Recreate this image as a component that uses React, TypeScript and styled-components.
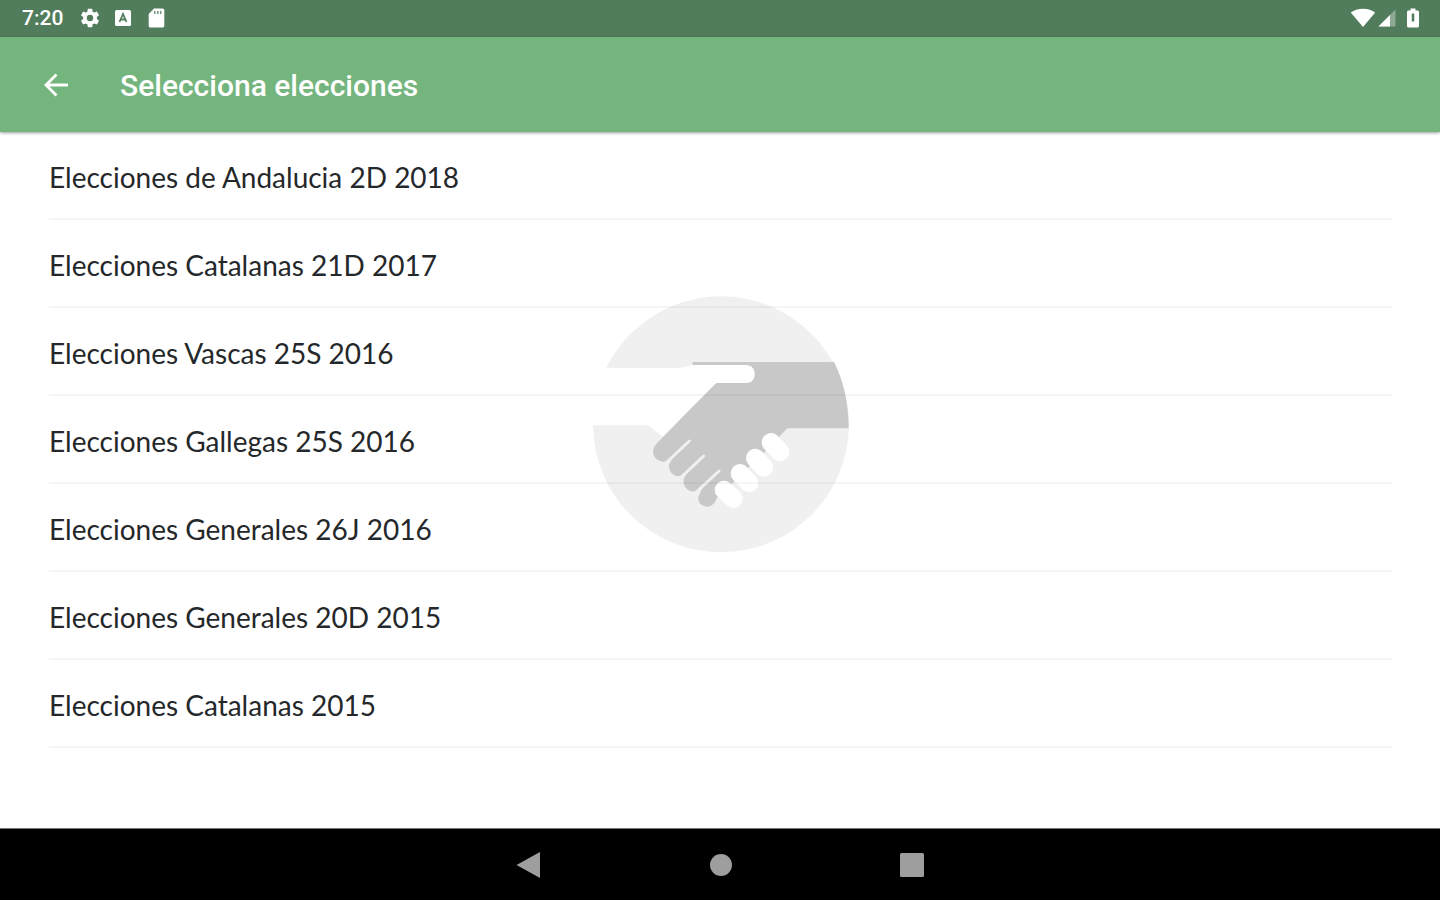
import React from "react";
import styled, { createGlobalStyle } from "styled-components";

const GlobalStyle = createGlobalStyle`
  * { box-sizing: border-box; }
  body { margin: 0; background: #fff; }
  button { margin: 0; padding: 0; border: 0; background: none; color: inherit; font: inherit; cursor: pointer; }
  svg { display: block; }
`;

const Screen = styled.div`
  display: flex;
  flex-direction: column;
  min-height: 100vh;
  font-family: Roboto, sans-serif;
`;

const StatusBar = styled.div`
  display: flex;
  align-items: center;
  justify-content: space-between;
  height: 37px;
  padding: 0 20px 2px 22px;
  background: #527d5d;
  color: #fff;
`;

const StatusGroup = styled.div<{ $gap: number }>`
  display: flex;
  align-items: center;
  gap: ${(p) => p.$gap}px;
`;

const Clock = styled.span`
  margin-right: 5px;
  font-size: 21px;
  font-weight: 500;
  line-height: 24px;
`;

const AppBar = styled.header`
  position: relative;
  display: flex;
  align-items: center;
  gap: 40px;
  height: 95px;
  padding: 2px 32px 0;
  background: #74b57e;
  color: #fff;
  box-shadow: 0 1px 3px rgba(0, 0, 0, 0.4);
`;

const BackButton = styled.button`
  display: grid;
  place-items: center;
  width: 48px;
  height: 48px;
`;

const Title = styled.h1`
  margin: 0;
  font-size: 30px;
  font-weight: 500;
  line-height: 36px;
`;

const Content = styled.main`
  position: relative;
  flex: 1;
  padding: 0 48px 80px 49px;
`;

const Watermark = styled.svg`
  position: absolute;
  top: 164px;
  left: 50%;
  width: 256px;
  height: 256px;
  overflow: visible;
  transform: translateX(-50%);
`;

const List = styled.ul`
  position: relative;
  margin: 0;
  padding: 0;
  list-style: none;
`;

const Item = styled.li`
  border-bottom: 2px solid rgba(0, 0, 0, 0.04);
`;

const ItemButton = styled.button`
  display: block;
  width: 100%;
  padding: 27px 0 23px;
  color: #25282a;
  font-family: Lato, sans-serif;
  font-size: 28px;
  line-height: 36px;
  text-align: left;
`;

const NavBar = styled.nav`
  display: flex;
  justify-content: center;
  height: 72px;
  border-top: 1px solid #777;
  background: #000;
`;

const NavButton = styled.button`
  display: grid;
  place-items: center;
  width: 192px;
`;

const elections = [
  "Elecciones de Andalucia 2D 2018",
  "Elecciones Catalanas 21D 2017",
  "Elecciones Vascas 25S 2016",
  "Elecciones Gallegas 25S 2016",
  "Elecciones Generales 26J 2016",
  "Elecciones Generales 20D 2015",
  "Elecciones Catalanas 2015",
];

const GearIcon = () => (
  <svg width="22" height="22" viewBox="0 0 24 24" fill="currentColor" aria-hidden="true">
    <path d="M19.43 12.98c.04-.32.07-.64.07-.98s-.03-.66-.07-.98l2.11-1.65c.19-.15.24-.42.12-.64l-2-3.46c-.12-.22-.39-.3-.61-.22l-2.49 1c-.52-.4-1.08-.73-1.69-.98l-.38-2.65A.488.488 0 0 0 14 2h-4c-.25 0-.46.18-.49.42l-.38 2.65c-.61.25-1.17.59-1.69.98l-2.49-1c-.23-.09-.49 0-.61.22l-2 3.46c-.13.22-.07.49.12.64l2.11 1.65c-.04.32-.07.65-.07.98s.03.66.07.98l-2.11 1.65c-.19.15-.24.42-.12.64l2 3.46c.12.22.39.3.61.22l2.49-1c.52.4 1.08.73 1.69.98l.38 2.65c.03.24.24.42.49.42h4c.25 0 .46-.18.49-.42l.38-2.65c.61-.25 1.17-.59 1.69-.98l2.49 1c.23.09.49 0 .61-.22l2-3.46c.12-.22.07-.49-.12-.64l-2.11-1.65zM12 15.5A3.5 3.5 0 1 1 12 8.500a3.5 3.5 0 0 1 0 7z" />
  </svg>
);

const KeyboardIcon = () => (
  <svg width="22" height="22" viewBox="0 0 22 22" aria-hidden="true">
    <rect x="3" y="3" width="16" height="16" rx="1.500" fill="currentColor" />
    <path d="M7.500 15 11 7l3.500 8M9 12.500h4" fill="none" stroke="#527d5d" strokeWidth="1.800" />
  </svg>
);

const SdCardIcon = () => (
  <svg width="22" height="22" viewBox="0 0 22 22" aria-hidden="true">
    <path d="M9 1.500h8.500c1 0 1.800.8 1.800 1.800v15.400c0 1-.8 1.800-1.800 1.800h-12c-1 0-1.800-.8-1.800-1.800V7z" fill="currentColor" />
    <path d="M9.800 4v3M12.800 4v3M15.800 4v3" stroke="#527d5d" strokeWidth="1.200" />
  </svg>
);

const WifiIcon = () => (
  <svg width="26" height="20" viewBox="0 0 26 20" fill="currentColor" aria-hidden="true">
    <path d="M13 19 .8 4.600C4 2.200 8.200.8 13 .8s9 1.400 12.200 3.800z" />
  </svg>
);

const SignalIcon = () => (
  <svg width="18" height="18" viewBox="0 0 18 18" fill="currentColor" aria-hidden="true">
    <path d="M17.500.5v17H.5z" opacity="0.35" />
    <path d="M12 6v11.500H.5z" />
  </svg>
);

const Battery = styled.svg`
  margin-left: 8px;
`;

const BatteryIcon = () => (
  <Battery width="14" height="20" viewBox="0 0 14 20" aria-hidden="true">
    <path d="M4.500.5h5v2h2c.8 0 1.500.7 1.500 1.500v14c0 .8-.7 1.500-1.500 1.500h-9C1.700 19.500 1 18.800 1 18V4c0-.8.7-1.500 1.500-1.500h2z" fill="currentColor" />
    <path d="M7 5.500v8" stroke="#527d5d" strokeWidth="2.500" />
  </Battery>
);

const BackArrow = () => (
  <svg width="26" height="26" viewBox="0 0 26 26" fill="none" stroke="currentColor" strokeWidth="2.800" aria-hidden="true">
    <path d="M25 12H4M13.500 1.500 3 12l10.500 10.500" />
  </svg>
);

const Handshake = () => (
  <Watermark viewBox="36 48 768 768" aria-hidden="true">
    <circle cx="423" cy="433" r="384" fill="#f0f0f0" />
    <path d="M338 246H762Q805 330 806 445H622L560 510L410 655Q402 680 382 680Q352 676 355 650L368 622Q350 638 330 633Q308 622 311 598L322 575Q306 590 287 588Q265 578 267 553L280 530Q264 546 246 545Q219 538 219 512Q220 500 232 488L408 309V258H338Z" fill="#c8c8c8" />
    <path d="M20 264H300L338 255H500C518 257 524 270 524 282C524 296 516 309 500 309H408L248 470L204 436H20Z" fill="#fff" />
    <g stroke="#f0f0f0" strokeWidth="9" strokeLinecap="round">
      <path d="M328 483 260 547" />
      <path d="M371 528 303 592" />
      <path d="M417 573 348 637" />
    </g>
    <g stroke="#fff" strokeWidth="56" strokeLinecap="round">
      <path d="M573 487 600 516" />
      <path d="M526 534 551 562" />
      <path d="M480 580 507 609" />
      <path d="M432 630 460 656" />
    </g>
  </Watermark>
);

export default function App() {
  return (
    <Screen>
      <GlobalStyle />
      <StatusBar>
        <StatusGroup $gap={11}>
          <Clock>7:20</Clock>
          <GearIcon />
          <KeyboardIcon />
          <SdCardIcon />
        </StatusGroup>
        <StatusGroup $gap={2}>
          <WifiIcon />
          <SignalIcon />
          <BatteryIcon />
        </StatusGroup>
      </StatusBar>
      <AppBar>
        <BackButton type="button" aria-label="Atrás">
          <BackArrow />
        </BackButton>
        <Title>Selecciona elecciones</Title>
      </AppBar>
      <Content>
        <Handshake />
        <List>
          {elections.map((name) => (
            <Item key={name}>
              <ItemButton type="button">{name}</ItemButton>
            </Item>
          ))}
        </List>
      </Content>
      <NavBar aria-label="Sistema">
        <NavButton type="button" aria-label="Volver">
          <svg width="24" height="26" viewBox="0 0 24 26" fill="#9e9e9e"><path d="M.5 13 24 0v26z" /></svg>
        </NavButton>
        <NavButton type="button" aria-label="Inicio">
          <svg width="24" height="24" viewBox="0 0 24 24" fill="#9e9e9e"><circle cx="13" cy="12" r="11" /></svg>
        </NavButton>
        <NavButton type="button" aria-label="Recientes">
          <svg width="24" height="24" viewBox="0 0 24 24" fill="#9e9e9e"><rect width="24" height="24" rx="1.500" /></svg>
        </NavButton>
      </NavBar>
    </Screen>
  );
}
